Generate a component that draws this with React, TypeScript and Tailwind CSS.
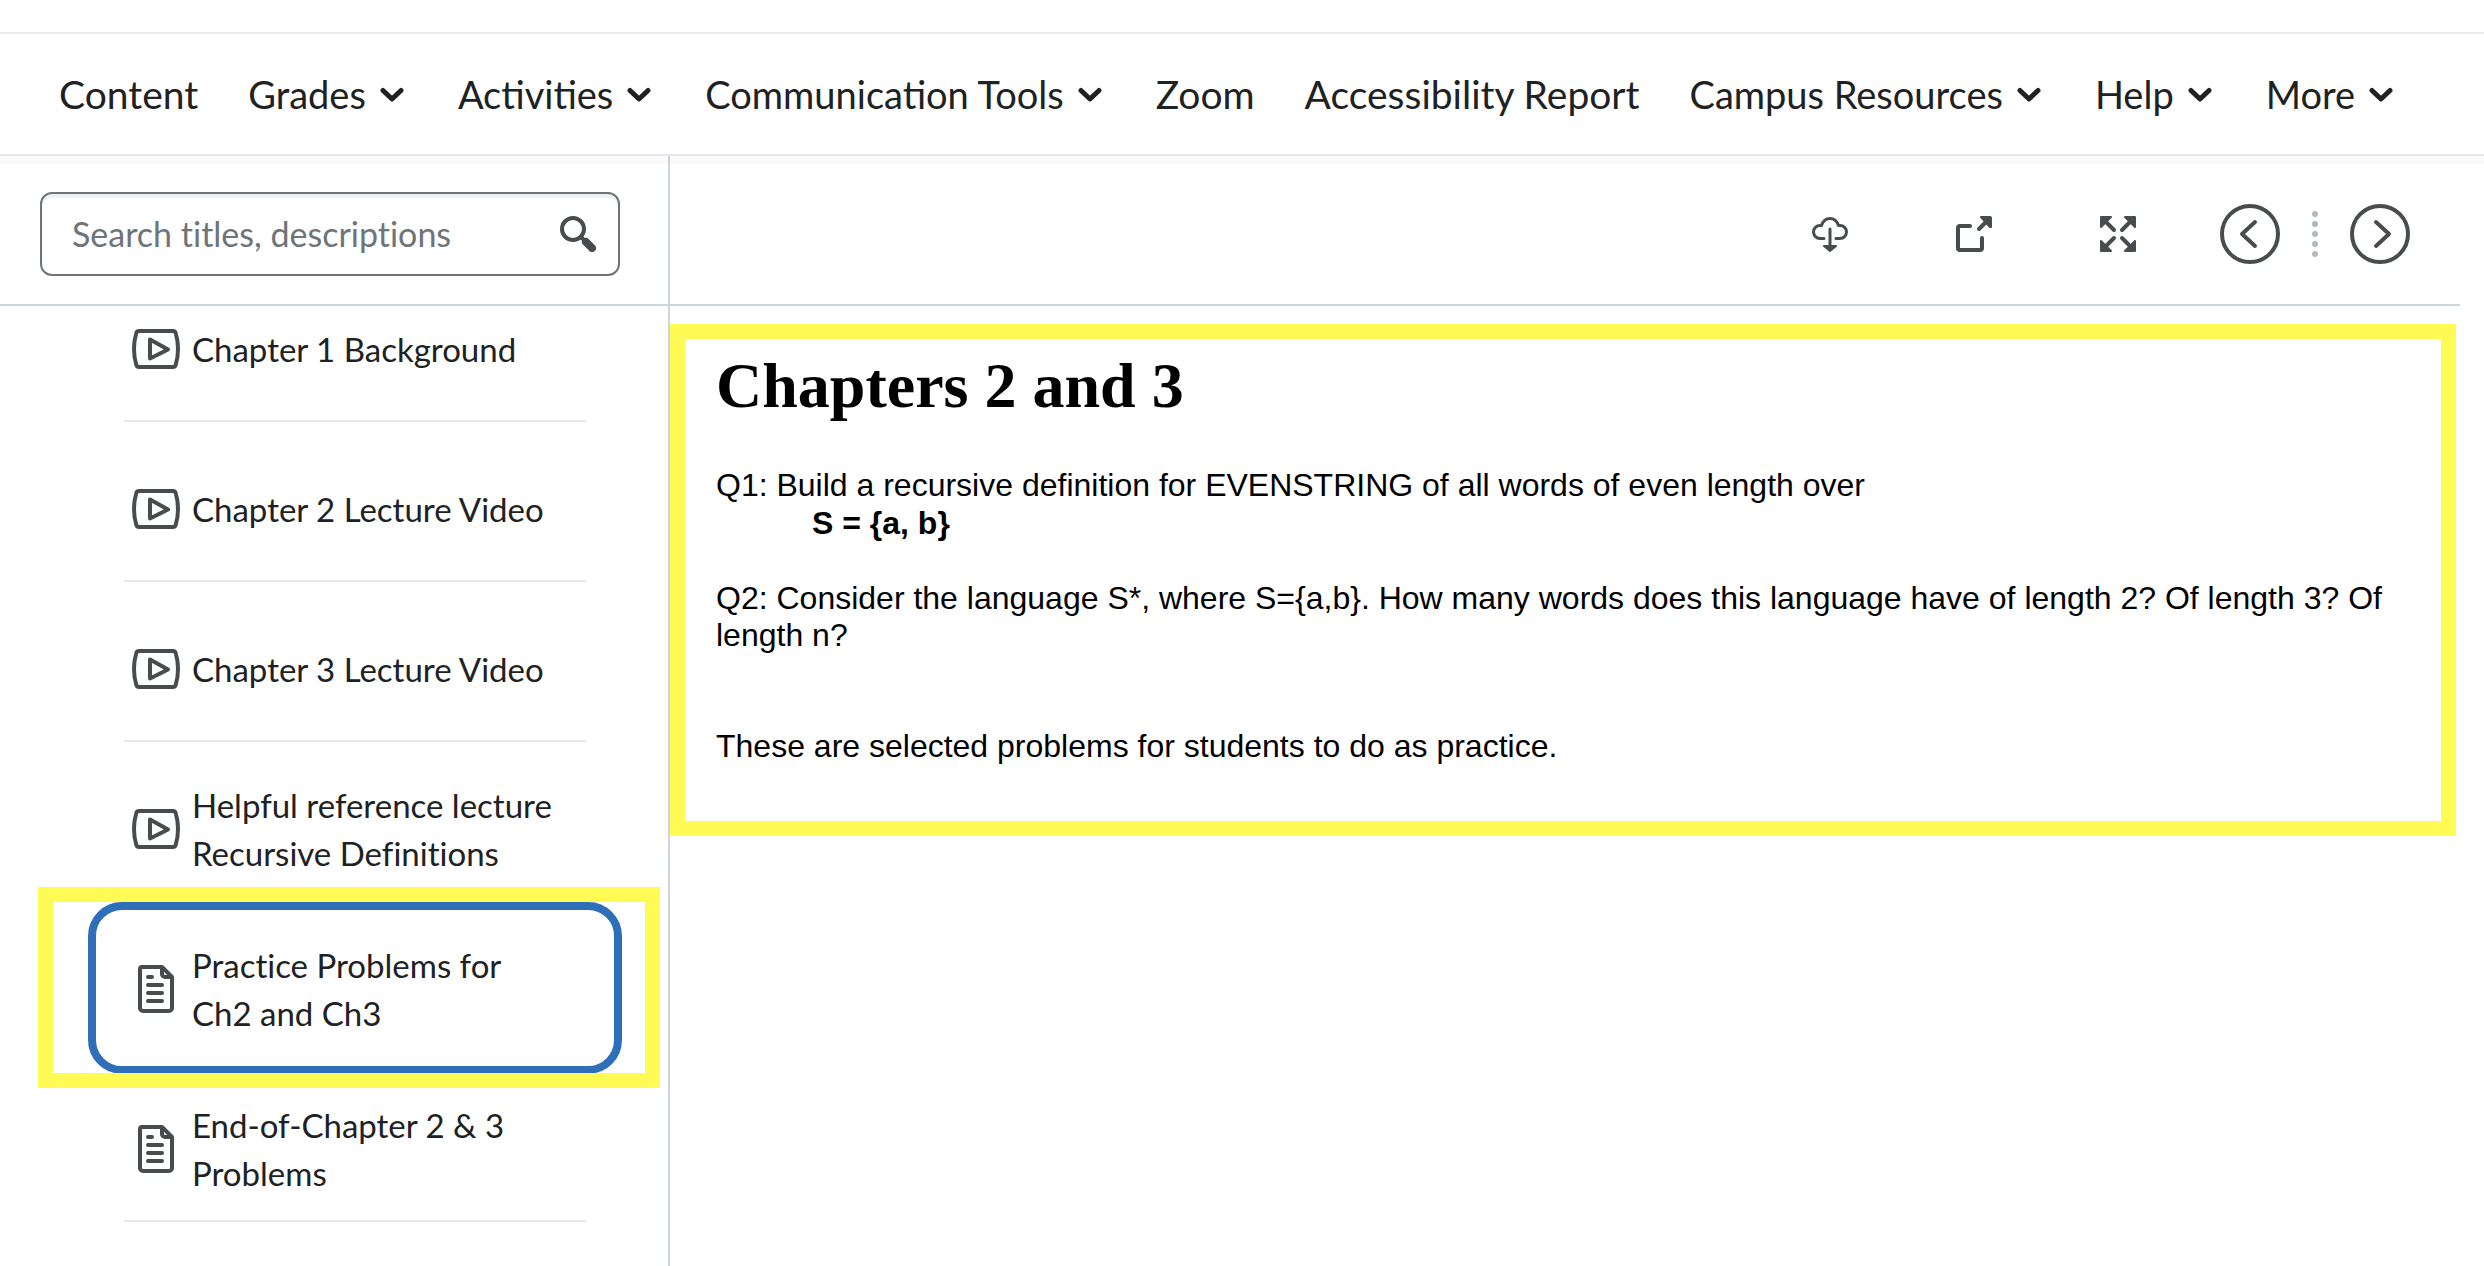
import React from "react";

const navItems = [
  { label: "Content", menu: false },
  { label: "Grades", menu: true },
  { label: "Activities", menu: true },
  { label: "Communication Tools", menu: true },
  { label: "Zoom", menu: false },
  { label: "Accessibility Report", menu: false },
  { label: "Campus Resources", menu: true },
  { label: "Help", menu: true },
  { label: "More", menu: true },
];

const topics = [
  { label: "Chapter 1 Background", kind: "video", current: false },
  { label: "Chapter 2 Lecture Video", kind: "video", current: false },
  { label: "Chapter 3 Lecture Video", kind: "video", current: false },
  { label: "Helpful reference lecture Recursive Definitions", kind: "video", current: false },
  { label: "Practice Problems for Ch2 and Ch3", kind: "page", current: true },
  { label: "End-of-Chapter 2 & 3 Problems", kind: "page", current: false },
];

const secondQuestion =
  "Q2: Consider the language S*, where S={a,b}. How many words does this language have of length 2? Of length 3? Of length n?";

function Chevron() {
  return (
    <svg className="h-4 w-6" viewBox="0 0 24 16" fill="none" stroke="currentColor" strokeWidth="5" strokeLinecap="round" strokeLinejoin="round" aria-hidden="true">
      <path d="M3 4.500l9 8.500L21 4.500" />
    </svg>
  );
}

function SearchIcon() {
  return (
    <svg className="size-9" viewBox="0 0 36 36" fill="none" stroke="currentColor" strokeLinecap="round" aria-hidden="true">
      <circle cx="13" cy="13" r="11" strokeWidth="4" />
      <path d="M21 21l3 3" strokeWidth="4" />
      <path d="M26 26l6 6" strokeWidth="8" />
    </svg>
  );
}

function VideoIcon() {
  return (
    <svg className="size-12 shrink-0" viewBox="0 0 48 48" fill="none" stroke="currentColor" strokeWidth="4" strokeLinejoin="round" aria-hidden="true">
      <path d="M7 6h34c1.500 0 2.500 1 2.800 2.500C45.500 14 46 19 46 24s-.5 10-2.200 15.500C43.500 41 42.500 42 41 42H7c-1.500 0-2.500-1-2.800-2.500C2.500 34 2 29 2 24S2.500 14 4.200 8.500C4.500 7 5.500 6 7 6z" />
      <path d="M18 14.500v19L36 24.500z" />
    </svg>
  );
}

function PageIcon() {
  return (
    <svg className="size-12 shrink-0" viewBox="0 0 48 48" fill="none" stroke="currentColor" strokeWidth="4" strokeLinecap="round" strokeLinejoin="round" aria-hidden="true">
      <path d="M10 2h20L40 12v31a3 3 0 0 1-3 3H11a3 3 0 0 1-3-3V4a2 2 0 0 1 2-2z" />
      <path d="M30 3v6a3 3 0 0 0 3 3h6" />
      <path d="M16 12h4M16 20h14M16 28h14M16 36h14" />
    </svg>
  );
}

function DownloadIcon() {
  return (
    <svg className="size-9" viewBox="0 0 36 36" fill="none" stroke="currentColor" strokeWidth="3" strokeLinecap="round" strokeLinejoin="round" aria-hidden="true">
      <path d="M12 22.500H8A6.500 6.500 0 0 1 8 9.500h1.500C11 5.200 14 2.500 18 2.500S25 5.200 26.500 9.500H28a6.500 6.500 0 0 1 0 13h-4" />
      <path d="M18 13v17" />
      <path d="M12 30h12l-6 5z" fill="currentColor" strokeWidth="2" />
    </svg>
  );
}

function OpenIcon() {
  return (
    <svg className="size-9" viewBox="0 0 36 36" fill="none" stroke="currentColor" strokeWidth="4" strokeLinecap="round" strokeLinejoin="round" aria-hidden="true">
      <path d="M14 10H4a2 2 0 0 0-2 2v20a2 2 0 0 0 2 2h20a2 2 0 0 0 2-2V22" />
      <path d="M23 13l8-8" />
      <path d="M25 1h9a1 1 0 0 1 1 1v9h-1z" fill="currentColor" strokeWidth="2" />
    </svg>
  );
}

function FullscreenIcon() {
  return (
    <svg className="size-9" viewBox="0 0 36 36" fill="none" stroke="currentColor" strokeWidth="4" strokeLinecap="round" strokeLinejoin="round" aria-hidden="true">
      <path d="M5 5l9 9M31 5l-9 9M5 31l9-9M31 31l-9-9" />
      <path d="M1 1h10L1 11zM35 1H25l10 10zM1 35h10L1 25zM35 35H25l10-10z" fill="currentColor" strokeWidth="2" />
    </svg>
  );
}

function ArrowIcon({ d }: { d: string }) {
  return (
    <svg className="size-[60px]" viewBox="0 0 60 60" fill="none" stroke="currentColor" strokeWidth="4" strokeLinecap="round" strokeLinejoin="round" aria-hidden="true">
      <circle cx="30" cy="30" r="28" />
      <path d={d} />
    </svg>
  );
}

export default function App() {
  return (
    <div className="flex h-screen flex-col overflow-hidden bg-white font-['Lato',sans-serif] text-[#202122]">
      <header className="mt-8 border-y-2 border-[#e8e8ee]">
        <nav className="flex h-[120px] items-center gap-[50px] px-[59px] leading-[48px]" aria-label="Course">
          {navItems.map((item) =>
            item.menu ? (
              <button key={item.label} type="button" className="flex items-center gap-3.5 pr-1 text-[38px] whitespace-nowrap">
                {item.label}
                <Chevron />
              </button>
            ) : (
              <a key={item.label} href="#" className="text-[39px] whitespace-nowrap">
                {item.label}
              </a>
            )
          )}
        </nav>
      </header>

      <div className="relative flex min-h-0 flex-1">
        <div className="pointer-events-none absolute inset-x-0 top-0 h-2 bg-black/[0.02]" />
        <aside className="flex w-[670px] shrink-0 flex-col border-r-2 border-[#cdd5dc]">
          <div className="flex h-[150px] shrink-0 items-center border-b-2 border-[#cdd5dc] pt-2 pr-12 pl-10">
            <form className="flex h-[84px] w-full items-center rounded-xl border-2 border-[#6e7477] pr-[22px] pl-[30px] shadow-[inset_0_4px_0_#eff1f2]" role="search">
              <input
                type="search"
                aria-label="Search titles, descriptions"
                placeholder="Search titles, descriptions"
                className="min-w-0 flex-1 bg-transparent text-[34px] leading-[48px] outline-none [font-variant-ligatures:none] placeholder:text-[#6e7477] placeholder:opacity-100"
              />
              <button type="button" aria-label="Search" className="text-[#494c4e]">
                <SearchIcon />
              </button>
            </form>
          </div>
          <div className="min-h-0 flex-1 overflow-hidden">
            <ul className="-mt-11 pr-[82px] pl-[124px]">
              {topics.map((topic) => (
                <li
                  key={topic.label}
                  className={topic.current ? "relative z-10 h-40 border-b-2 border-transparent" : "h-40 border-b-2 border-[#e3e9ef]"}
                >
                  {topic.current && (
                    <>
                      <span className="absolute -inset-x-9 top-0 -bottom-3.5 rounded-[34px] border-8 border-[#2f6eb9]" />
                      <span className="absolute -top-[15px] -right-[74px] -bottom-7 -left-[86px] border-[15px] border-[#fffb54]" />
                    </>
                  )}
                  <a href="#" aria-current={topic.current ? "page" : undefined} className="flex h-full items-center gap-3 pt-4 pr-6 pl-2">
                    <span className="text-[#494c4e]">{topic.kind === "video" ? <VideoIcon /> : <PageIcon />}</span>
                    <span className="text-[33px] leading-[48px] [font-variant-ligatures:none]">{topic.label}</span>
                  </a>
                </li>
              ))}
            </ul>
          </div>
        </aside>

        <main className="min-w-0 flex-1 pr-6">
          <div className="flex h-[150px] items-center justify-end border-b-2 border-[#cdd5dc] pt-2 pr-[50px] text-[#494c4e]">
            <div className="flex items-center gap-[108px] pr-[84px]">
              <button type="button" aria-label="Download"><DownloadIcon /></button>
              <button type="button" aria-label="Open in new window"><OpenIcon /></button>
              <button type="button" aria-label="Full screen"><FullscreenIcon /></button>
            </div>
            <div className="flex items-center gap-8">
              <button type="button" aria-label="Previous"><ArrowIcon d="M35 18L22 30l13 12" /></button>
              <span className="flex flex-col gap-1" aria-hidden="true">
                {[0, 1, 2, 3, 4].map((dot) => (
                  <span key={dot} className="size-1.5 rounded-full bg-[#b1b9be]" />
                ))}
              </span>
              <button type="button" aria-label="Next"><ArrowIcon d="M26 18l13 12-13 12" /></button>
            </div>
          </div>

          <article className="mt-[18px] mr-1 border-[15px] border-[#fffb54] pt-2.5 pr-10 pb-14 pl-[31px] font-['Liberation_Sans',sans-serif] text-[32px] leading-[37px] text-black">
            <h1 className="font-['Liberation_Serif',serif] text-[64px] leading-[74px] font-bold">Chapters 2 and 3</h1>
            <p className="mt-[43px] leading-[38px]">Q1: Build a recursive definition for EVENSTRING of all words of even length over</p>
            <p className="pl-24 leading-[38px] font-bold">{"S = {a, b}"}</p>
            <p className="mt-[38px]">{secondQuestion}</p>
            <p className="mt-[74px]">These are selected problems for students to do as practice.</p>
          </article>
        </main>
      </div>
    </div>
  );
}
